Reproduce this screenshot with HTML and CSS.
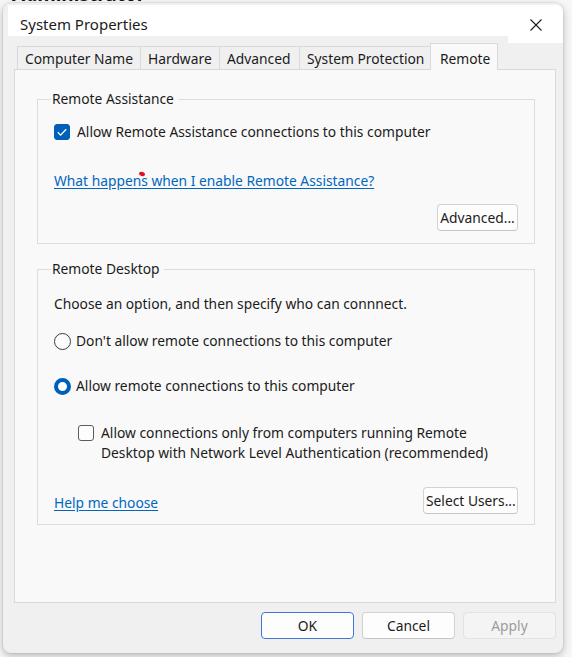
FILE: index.html
```html
<!DOCTYPE html>
<html>
<head>
<meta charset="utf-8">
<title>System Properties</title>
<link rel="stylesheet" href="styles.css">
</head>
<body>
<div class="desktop">
  <div class="backdrop-title">Administrator</div>
  <div class="window">
    <div class="titlebar">
      <div class="title">System Properties</div>
      <div class="close">
        <svg width="12" height="12" viewBox="0 0 12 12"><path d="M0.5 0.5L11.5 11.5M11.5 0.5L0.5 11.5" stroke="#1b1b1b" stroke-width="1.1" fill="none"/></svg>
      </div>
    </div>
    <div class="tabs">
      <div class="tab tab-name">Computer Name</div>
      <div class="tab tab-hw">Hardware</div>
      <div class="tab tab-adv">Advanced</div>
      <div class="tab tab-sp">System Protection</div>
      <div class="tab tab-remote active">Remote</div>
    </div>
    <div class="panel">
      <fieldset class="group group-ra">
        <legend>Remote Assistance</legend>
        <div class="check-row">
          <span class="checkbox checked"><svg width="16" height="16" viewBox="0 0 16 16"><path d="M3.8 8.3L6.6 11.1L12.2 5.2" stroke="#fff" stroke-width="1.3" fill="none"/></svg></span>
          <span>Allow Remote Assistance connections to this computer</span>
        </div>
        <div class="link-row"><a class="link link-help">What happens when I enable Remote Assistance?<span class="red-dot"></span></a></div>
        <div class="btn-row"><button class="btn btn-advanced">Advanced...</button></div>
      </fieldset>
      <fieldset class="group group-rd">
        <legend>Remote Desktop</legend>
        <div class="text-row">Choose an option, and then specify who can connnect.</div>
        <div class="radio-row first"><span class="radio"></span><span>Don't allow remote connections to this computer</span></div>
        <div class="radio-row second"><span class="radio checked"></span><span>Allow remote connections to this computer</span></div>
        <div class="nla-row"><span class="checkbox"></span><span>Allow connections only from computers running Remote<br>Desktop with Network Level Authentication (recommended)</span></div>
        <div class="bottom-row"><a class="link link-choose">Help me choose</a><button class="btn btn-users">Select Users...</button></div>
      </fieldset>
    </div>
    <div class="footer">
      <button class="btn footer-btn default">OK</button>
      <button class="btn footer-btn">Cancel</button>
      <button class="btn footer-btn disabled">Apply</button>
    </div>
  </div>
</div>
</body>
</html>
```
FILE: styles.css
```css
* { box-sizing: border-box; }
html, body { margin: 0; padding: 0; }
body {
  width: 572px;
  height: 657px;
  overflow: hidden;
  background: #f7f7f7;
  font-family: "Noto Sans", "Open Sans", sans-serif;
  font-size: 13.8px;
  color: #1b1b1b;
  position: relative;
}
.desktop { padding: 3px 0 0 3px; }
.backdrop-title {
  position: absolute;
  left: 12px;
  top: -19px;
  font-weight: 700;
  font-size: 19px;
  color: #111;
}
.window {
  position: relative;
  z-index: 1;
  width: 560px;
  height: 650px;
  background: #f0f0f0;
  border-radius: 8px;
  box-shadow: 0 0 0 1px rgba(0,0,0,0.05), 0 3px 8px rgba(0,0,0,0.25);
  display: flex;
  flex-direction: column;
}
.titlebar {
  display: flex;
  align-items: flex-start;
  height: 40px;
  padding: 2px 0 0 5px;
}
.title {
  width: 500px;
  height: 31px;
  background: #fff;
  padding: 8px 0 0 12px;
  font-size: 15px;
  line-height: 22px;
}
.close {
  width: 55px;
  height: 38px;
  background: #fff;
  border-top-right-radius: 7px;
  display: flex;
  justify-content: center;
  padding-top: 14px;
}
.tabs {
  display: flex;
  align-items: flex-end;
  height: 27px;
  padding-left: 14px;
  margin-bottom: -1px;
  position: relative;
  z-index: 1;
}
.tab {
  height: 24px;
  padding: 1px 0 0 7px;
  border: 1px solid #d9d9d9;
  margin-left: -1px;
  background: #f0f0f0;
  line-height: 21px;
  white-space: nowrap;
  overflow: hidden;
}
.tab:first-child { margin-left: 0; }
.tab-name { width: 124px; }
.tab-hw { width: 80px; }
.tab-adv { width: 81px; }
.tab-sp { width: 132px; }
.tab.active {
  width: 68px;
  height: 27px;
  background: #f9f9f9;
  border-bottom: none;
  padding: 4px 0 0 9px;
}
.panel {
  margin-left: 11px;
  width: 542px;
  height: 534px;
  background: #f9f9f9;
  border: 1px solid #d9d9d9;
  padding: 0 0 0 22px;
}
.group {
  width: 498px;
  margin: 0;
  border: 1px solid #d8dee5;
  padding: 0 16px;
  min-width: 0;
}
.group legend {
  padding: 0 4px 0 1px;
  margin-left: -3px;
  line-height: 20px;
  height: 20px;
}
.group-ra { margin-top: 19px; padding-top: 13px; padding-bottom: 12px; }
.group-rd { margin-top: 15px; padding-top: 15px; padding-bottom: 10px; }
.check-row {
  display: flex;
  align-items: center;
  gap: 7px;
  line-height: 20px;
  height: 20px;
}
.checkbox {
  width: 16px;
  height: 16px;
  border: 1px solid #5c5c5c;
  border-radius: 3px;
  background: #fdfdfd;
  flex: none;
  display: block;
}
.checkbox.checked {
  background: #005fb8;
  border-color: #005fb8;
  position: relative;
}
.checkbox.checked svg { position: absolute; left: -1px; top: -1px; }
.link {
  color: #0067c0;
  text-decoration: underline;
  text-underline-offset: 2px;
  line-height: 20px;
  cursor: pointer;
}
.link-row { margin-top: 29px; line-height: 20px; }
.link-help { position: relative; }
.red-dot {
  position: absolute;
  left: 85px;
  top: 1px;
  width: 6px;
  height: 4px;
  border-radius: 50%;
  background: #e3121c;
  transform: rotate(20deg);
}
.btn-row { display: flex; justify-content: flex-end; margin-top: 13px; }
.btn {
  height: 27px;
  font-family: inherit;
  font-size: 13.8px;
  color: #1b1b1b;
  background: #fdfdfd;
  border: 1px solid #d2d2d2;
  border-bottom-color: #c6c6c6;
  border-radius: 4px;
  padding: 0 2px;
  line-height: 24px;
  white-space: nowrap;
}
.btn-advanced { width: 81px; }
.btn-users { width: 95px; }
.text-row { line-height: 20px; height: 20px; }
.radio-row {
  display: flex;
  align-items: center;
  gap: 5px;
  line-height: 20px;
  height: 20px;
}
.radio-row.first { margin-top: 17px; }
.radio-row.second { margin-top: 25px; }
.radio {
  width: 17px;
  height: 17px;
  border-radius: 50%;
  border: 1px solid #3a3a3a;
  background: #fdfdfd;
  flex: none;
}
.radio.checked {
  border: 4.5px solid #005fb8;
  background: #fff;
}
.nla-row {
  display: flex;
  align-items: flex-start;
  gap: 7px;
  margin-top: 27px;
  padding-left: 24px;
  line-height: 20px;
}
.nla-row .checkbox { margin-top: 2px; }
.bottom-row {
  display: flex;
  justify-content: space-between;
  align-items: flex-end;
  margin-top: 24px;
}
.link-choose { margin-bottom: 1px; }
.footer {
  display: flex;
  justify-content: flex-end;
  gap: 8px;
  padding: 9px 7px 0 0;
}
.footer-btn { width: 93px; }
.footer-btn.default { border: 1px solid #4574d9; }
.footer-btn.disabled {
  background: #f4f4f4;
  border-color: #e2e2e2;
  color: #9c9c9c;
}
```
